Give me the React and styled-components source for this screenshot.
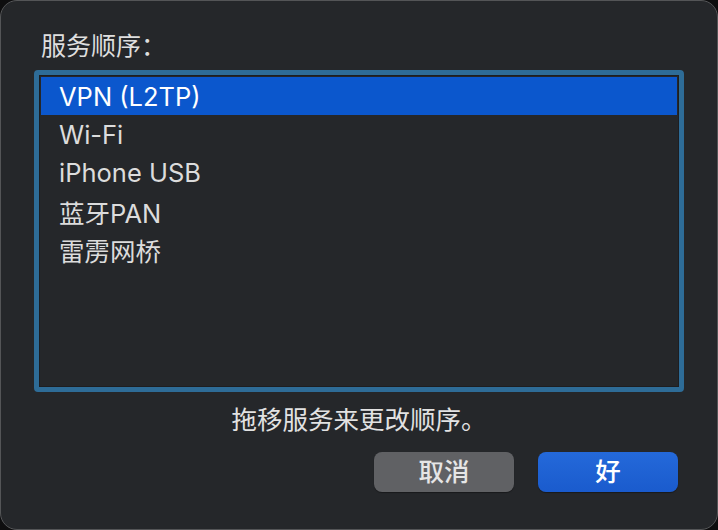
import styled, { createGlobalStyle } from "styled-components";

const services = ["VPN (L2TP)", "Wi-Fi", "iPhone USB", "蓝牙PAN", "雷雳网桥"];

function App() {
  return (
    <>
      <GlobalStyle />
      <Dialog>
        <Title>服务顺序：</Title>
        <ListFrame>
          <List>
            {services.map((name, i) => (
              <Row key={name} selected={i === 0}>
                {name}
              </Row>
            ))}
          </List>
        </ListFrame>
        <Hint>拖移服务来更改顺序。</Hint>
        <Buttons>
          <Button>取消</Button>
          <Button primary>好</Button>
        </Buttons>
      </Dialog>
    </>
  );
}

const GlobalStyle = createGlobalStyle`
  html, body {
    margin: 0;
    padding: 0;
    background: #0e0e0f;
  }
  body {
    font-family: Inter, "Noto Sans CJK SC", sans-serif;
    -webkit-font-smoothing: antialiased;
  }
`;

const Dialog = styled.div`
  width: 718px;
  height: 530px;
  box-sizing: border-box;
  border: 1px solid #545557;
  border-radius: 17px;
  background: #25272a;
  padding: 30px 33px 0;
  display: flex;
  flex-direction: column;
  color: #dedede;
`;

const Title = styled.div`
  font-size: 25px;
  line-height: 30px;
  padding-left: 7px;
  margin-bottom: 9px;
`;

const ListFrame = styled.div`
  height: 322px;
  box-sizing: border-box;
  border: 5px solid #2e6c97;
  border-radius: 4px;
  background: #25272a;
`;

const List = styled.div`
  height: 100%;
  box-sizing: border-box;
  border: 1px solid #1d1e21;
  padding: 1px;
  display: flex;
  flex-direction: column;
`;

const Row = styled.div`
  height: 38.4px;
  flex: none;
  display: flex;
  align-items: center;
  padding-left: 18px;
  font-size: 25.5px;
  color: ${(p) => (p.selected ? "#ffffff" : "#dcdcdc")};
  background: ${(p) => (p.selected ? "#0b57cd" : "transparent")};
`;

const Hint = styled.div`
  margin-top: 13px;
  font-size: 25.5px;
  line-height: 30px;
  text-align: center;
  color: #e2e2e2;
`;

const Buttons = styled.div`
  margin-top: 17px;
  padding-right: 6px;
  display: flex;
  justify-content: flex-end;
  gap: 24px;
`;

const Button = styled.button`
  width: 140px;
  height: 40px;
  border: none;
  border-radius: 8px;
  font-family: inherit;
  font-size: 25.5px;
  font-weight: 500;
  line-height: 40px;
  padding: 0;
  color: ${(p) => (p.primary ? "#ffffff" : "#e6e6e6")};
  background: ${(p) =>
    p.primary ? "linear-gradient(#2469da, #1a5bcd)" : "#606164"};
  box-shadow: 0 1px 1px rgba(0, 0, 0, 0.35);
`;

export default App;
